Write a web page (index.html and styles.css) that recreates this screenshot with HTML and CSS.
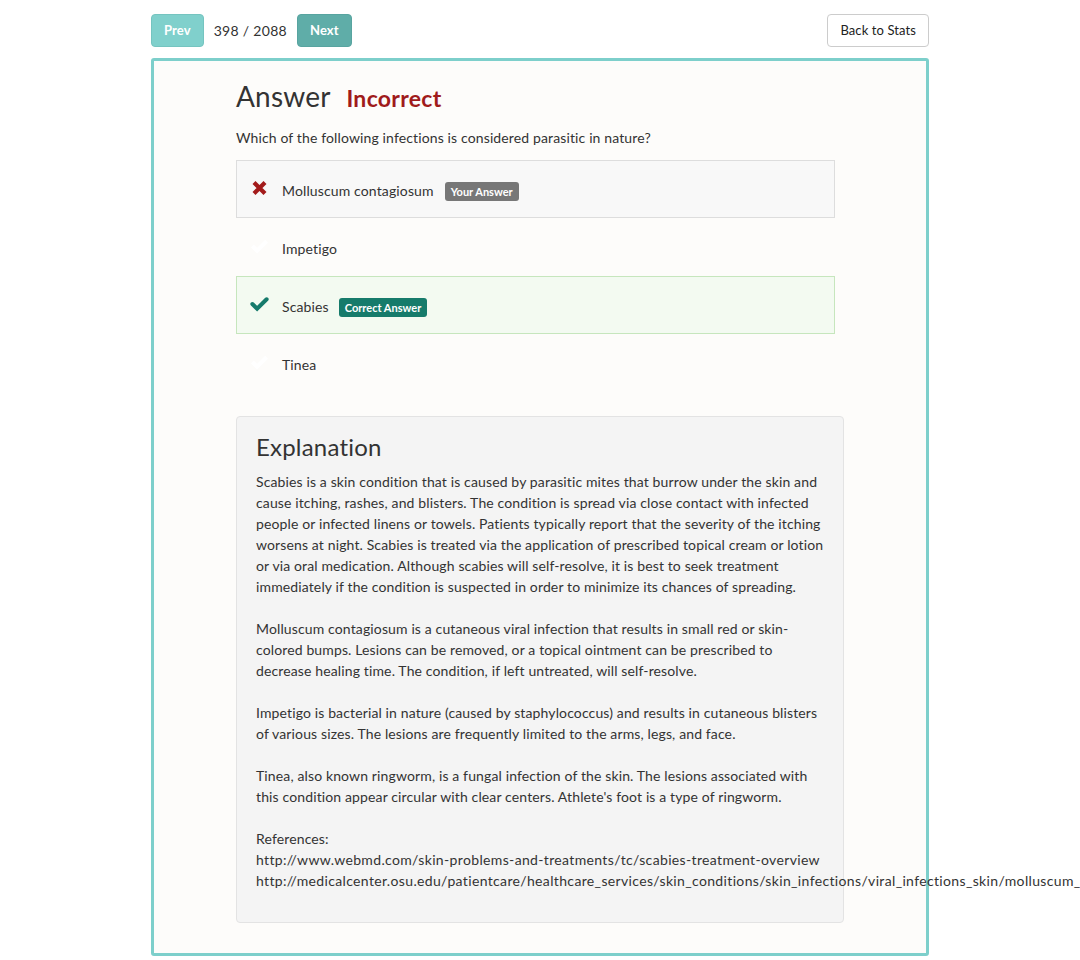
FILE: index.html
```html
<!DOCTYPE html>
<html>
<head>
<meta charset="utf-8">
<link rel="stylesheet" href="styles.css">
</head>
<body>
<div class="page">
  <div class="toolbar">
    <div class="nav">
      <button class="btn btn-prev">Prev</button>
      <span class="counter">398 / 2088</span>
      <button class="btn btn-next">Next</button>
    </div>
    <button class="btn btn-back">Back to Stats</button>
  </div>
  <div class="card">
    <div class="content">
      <h1 class="title">Answer <span class="status">Incorrect</span></h1>
      <p class="question">Which of the following infections is considered parasitic in nature?</p>
      <ul class="options">
        <li class="option option-wrong">
          <svg class="icon" viewBox="0 0 18 18"><path d="M3.5 3.5L14.5 14.5M14.5 3.5L3.5 14.5" stroke="#a31b1b" stroke-width="4.2" fill="none"/></svg>
          <span class="label">Molluscum contagiosum</span>
          <span class="badge badge-gray">Your Answer</span>
        </li>
        <li class="option">
          <svg class="icon" viewBox="0 0 20 18"><path d="M2.5 9L7.5 14L17.5 4" stroke="#ffffff" stroke-width="4.2" fill="none"/></svg>
          <span class="label">Impetigo</span>
        </li>
        <li class="option option-right">
          <svg class="icon" viewBox="0 0 20 18"><path d="M2.5 9L7.5 14L17.5 4" stroke="#157a6b" stroke-width="4.2" fill="none" stroke-linecap="round" stroke-linejoin="miter"/></svg>
          <span class="label">Scabies</span>
          <span class="badge badge-green">Correct Answer</span>
        </li>
        <li class="option">
          <svg class="icon" viewBox="0 0 20 18"><path d="M2.5 9L7.5 14L17.5 4" stroke="#ffffff" stroke-width="4.2" fill="none"/></svg>
          <span class="label">Tinea</span>
        </li>
      </ul>
      <div class="explanation">
        <h3 class="exp-title">Explanation</h3>
        <p>Scabies is a skin condition that is caused by parasitic mites that burrow under the skin and cause itching, rashes, and blisters. The condition is spread via close contact with infected people or infected linens or towels. Patients typically report that the severity of the itching worsens at night. Scabies is treated via the application of prescribed topical cream or lotion or via oral medication. Although scabies will self-resolve, it is best to seek treatment immediately if the condition is suspected in order to minimize its chances of spreading.</p>
        <p>Molluscum contagiosum is a cutaneous viral infection that results in small red or skin-colored bumps. Lesions can be removed, or a topical ointment can be prescribed to decrease healing time. The condition, if left untreated, will self-resolve.</p>
        <p>Impetigo is bacterial in nature (caused by staphylococcus) and results in cutaneous blisters of various sizes. The lesions are frequently limited to the arms, legs, and face.</p>
        <p>Tinea, also known ringworm, is a fungal infection of the skin. The lesions associated with this condition appear circular with clear centers. Athlete's foot is a type of ringworm.</p>
        <p class="refs">References:<br><span class="url">http://www.webmd.com/skin-problems-and-treatments/tc/scabies-treatment-overview</span><br><span class="url">http://medicalcenter.osu.edu/patientcare/healthcare_services/skin_conditions/skin_infections/viral_infections_skin/molluscum_contagiosum</span></p>
      </div>
    </div>
  </div>
</div>
</body>
</html>
```

FILE: styles.css
```css
html {
  overflow-x: hidden;
}
body {
  margin: 0;
  background: #ffffff;
  font-family: Lato, "Open Sans", sans-serif;
  font-size: 14px;
  line-height: 21px;
  letter-spacing: 0.13px;
  color: #333333;
}
.page {
  width: 778px;
  margin: 0 auto;
  padding-top: 14px;
}
.toolbar {
  display: flex;
  justify-content: space-between;
  align-items: center;
  margin-bottom: 11px;
}
.nav {
  display: flex;
  align-items: center;
  gap: 10px;
}
.btn {
  font-family: Lato, "Open Sans", sans-serif;
  font-size: 13px;
  line-height: 19px;
  letter-spacing: 0.1px;
  padding: 6px 12px;
  border-radius: 4px;
  border: 1px solid transparent;
  cursor: pointer;
}
.btn-prev {
  background: #80d0cc;
  border-color: #75c4c0;
  color: #ffffff;
  font-weight: 700;
}
.btn-next {
  background: #5fada8;
  border-color: #58a4a0;
  color: #ffffff;
  font-weight: 700;
}
.counter {
  font-size: 14px;
  letter-spacing: 0.3px;
  color: #333333;
}
.btn-back {
  background: #ffffff;
  border-color: #cccccc;
  color: #222222;
  font-size: 13px;
}
.card {
  border: 3px solid #7dcfcb;
  border-radius: 3px;
  background: #fdfcfa;
  padding: 16px 0 30px 82px;
}
.content {
  width: 608px;
}
.title {
  margin: 0;
  font-size: 28px;
  font-weight: 400;
  line-height: 38px;
  letter-spacing: 0.2px;
  color: #333333;
}
.status {
  font-size: 23px;
  font-weight: 700;
  color: #a01b1b;
  margin-left: 9px;
  letter-spacing: 0.3px;
}
.question {
  margin: 10px 0 12px;
}
.options {
  list-style: none;
  margin: 0 0 24px;
  padding: 0;
  width: 599px;
}
.option {
  display: flex;
  align-items: center;
  height: 58px;
  box-sizing: border-box;
  padding-left: 13px;
  padding-top: 2px;
  border: 1px solid transparent;
}
.option-wrong {
  background: #f8f8f8;
  border-color: #dddddd;
}
.option-right {
  background: #f3faf1;
  border-color: #c6e6bd;
}
.icon {
  width: 19px;
  height: 18px;
  margin-right: 13px;
  margin-top: -4px;
  flex: none;
}
.label {
  font-size: 14px;
}
.badge {
  margin-left: 11px;
  margin-top: 2px;
  font-size: 11px;
  font-weight: 700;
  line-height: 13px;
  letter-spacing: 0;
  padding: 3px 6px;
  border-radius: 3px;
  color: #ffffff;
}
.badge-gray {
  background: #777777;
}
.badge-green {
  background: #167b6b;
  margin-left: 10px;
}
.explanation {
  background: #f4f4f4;
  border: 1px solid #e3e3e3;
  border-radius: 4px;
  padding: 17px 19px 31px;
}
.exp-title {
  margin: 0 0 11px;
  font-size: 24px;
  font-weight: 400;
  line-height: 26px;
  letter-spacing: 0.2px;
  color: #333333;
}
.explanation p {
  margin: 0 0 21px;
}
.explanation p.refs {
  margin: 0;
  white-space: nowrap;
}
.url {
  letter-spacing: 0.35px;
}
```
